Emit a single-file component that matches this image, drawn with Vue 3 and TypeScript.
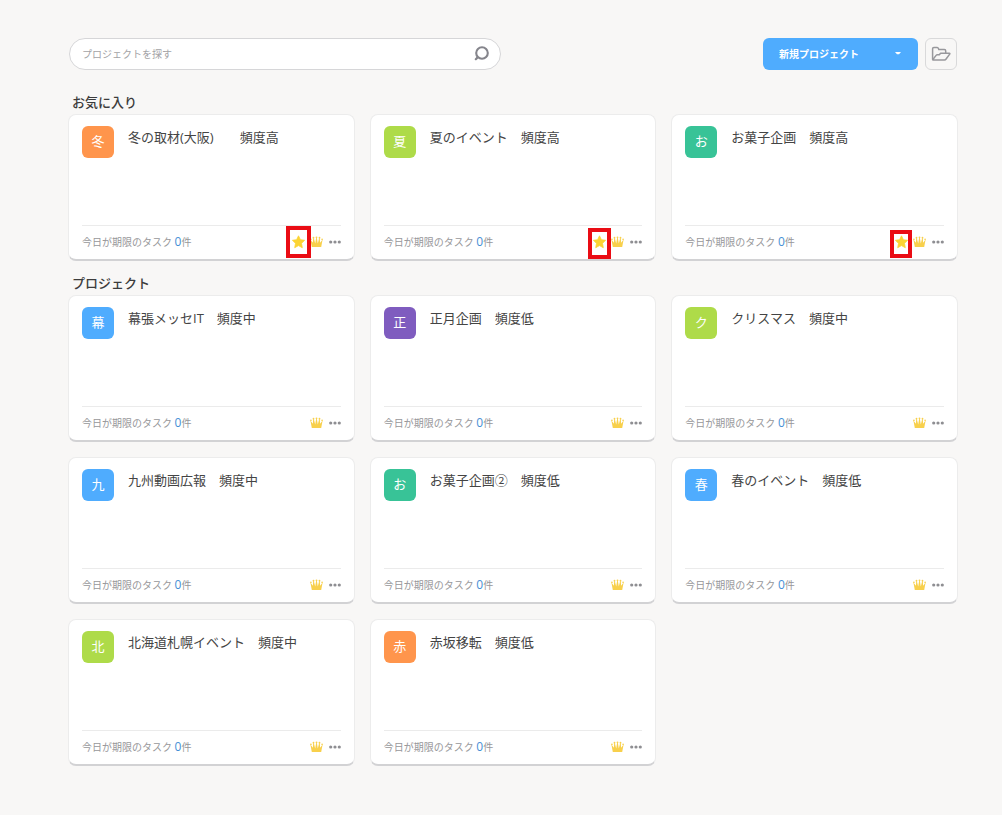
<script setup lang="ts">
import { ref } from 'vue'

type Tone = 'orange' | 'lime' | 'green' | 'blue' | 'purple'

interface Project {
  id: number
  name: string
  tone: Tone
  due: number
  mark?: 'tall' | 'medium' | 'short'
}

interface Section {
  id: string
  title: string
  projects: Project[]
}

const query = ref('')

const sections: Section[] = [
  {
    id: 'favorites',
    title: 'お気に入り',
    projects: [
      { id: 1, name: '冬の取材(大阪)　　頻度高', tone: 'orange', due: 0, mark: 'tall' },
      { id: 2, name: '夏のイベント　頻度高', tone: 'lime', due: 0, mark: 'medium' },
      { id: 3, name: 'お菓子企画　頻度高', tone: 'green', due: 0, mark: 'short' },
    ],
  },
  {
    id: 'projects',
    title: 'プロジェクト',
    projects: [
      { id: 4, name: '幕張メッセIT　頻度中', tone: 'blue', due: 0 },
      { id: 5, name: '正月企画　頻度低', tone: 'purple', due: 0 },
      { id: 6, name: 'クリスマス　頻度中', tone: 'lime', due: 0 },
      { id: 7, name: '九州動画広報　頻度中', tone: 'blue', due: 0 },
      { id: 8, name: 'お菓子企画②　頻度低', tone: 'green', due: 0 },
      { id: 9, name: '春のイベント　頻度低', tone: 'blue', due: 0 },
      { id: 10, name: '北海道札幌イベント　頻度中', tone: 'lime', due: 0 },
      { id: 11, name: '赤坂移転　頻度低', tone: 'orange', due: 0 },
    ],
  },
]
</script>

<template>
  <main class="page">
    <header class="toolbar">
      <form class="search" role="search" @submit.prevent>
        <input v-model="query" class="search-input" type="text" aria-label="プロジェクトを探す" placeholder="プロジェクトを探す" />
        <button class="search-button" type="submit" aria-label="検索">
          <svg width="16" height="16" viewBox="0 0 16 16" fill="none" stroke="#85858c" stroke-linecap="round">
            <circle cx="9" cy="7" r="5.8" stroke-width="2.1" />
            <path d="M4.4 11.6 2.8 13.2" stroke-width="2.2" />
          </svg>
        </button>
      </form>
      <div class="toolbar-actions">
        <button class="new-project" type="button" aria-haspopup="menu">
          <span>新規プロジェクト</span>
          <svg width="6" height="3" viewBox="0 0 6 3"><path d="M0 0h6L4 2.2H2z" fill="#fff" /></svg>
        </button>
        <button class="folder" type="button" aria-label="フォルダ">
          <svg width="20" height="16" viewBox="0 0 20 16" fill="none" stroke="#98989c" stroke-width="1.5" stroke-linejoin="round">
            <path d="M1.6 13.6V2.8C1.6 2 2.1 1.5 2.9 1.5h3.2c.8 0 1.2.4 1.4 1.1l.3 1h5.6c.8 0 1.3.5 1.3 1.3v2.2" />
            <path d="M1.7 13.8 5.1 9.4c.3-.4.7-.6 1.2-.6h2l1.3-1.6h8.7c.6 0 .8.4.4.9l-3.6 4.9c-.4.6-.9.9-1.6.9H2.1c-.3 0-.4 0-.4-.1Z" />
          </svg>
        </button>
      </div>
    </header>

    <section v-for="section in sections" :key="section.id" class="section" :aria-labelledby="section.id">
      <h2 :id="section.id" class="section-title">{{ section.title }}</h2>
      <div class="grid">
        <article v-for="project in section.projects" :key="project.id" class="card">
          <div class="card-body">
            <span class="avatar" :class="project.tone" aria-hidden="true">{{ project.name.charAt(0) }}</span>
            <h3 class="card-title">{{ project.name }}</h3>
          </div>
          <footer class="card-footer">
            <p class="due">今日が期限のタスク <span class="count">{{ project.due }}</span>件</p>
            <div class="card-actions">
              <button v-if="project.mark" class="icon-button star" type="button" aria-label="お気に入り">
                <svg width="13" height="14" viewBox="0 0 13 14">
                  <path d="M6.5.8 8.4 4.7l4.2.6-3.1 3 .8 4.4-3.8-2.1-3.8 2.1.8-4.4-3.1-3 4.2-.6z" fill="#fbd433" stroke="#fbd433" stroke-width=".8" stroke-linejoin="round" />
                </svg>
                <span class="mark" :class="project.mark"></span>
              </button>
              <svg class="crown" width="13" height="12" viewBox="0 0 13 12" fill="#f8d04c" aria-hidden="true">
                <path d="M.4 3.4 2.9 6.8 3.2 2h.6L5.2 7.4 6.2 1.6h.6L7.8 7.4 9.2 2h.6l.3 4.8 2.5-3.4-1.4 7.6H1.8z" />
                <circle cx=".9" cy="3.4" r=".8" />
                <circle cx="3.5" cy="1.7" r=".9" />
                <circle cx="6.5" cy="1.3" r=".9" />
                <circle cx="9.5" cy="1.7" r=".9" />
                <circle cx="12.1" cy="3.4" r=".8" />
              </svg>
              <button class="icon-button more" type="button" aria-label="メニュー">
                <svg width="12" height="4" viewBox="0 0 12 4" fill="#8e8e92">
                  <circle cx="1.7" cy="2" r="1.6" />
                  <circle cx="6" cy="2" r="1.6" />
                  <circle cx="10.3" cy="2" r="1.6" />
                </svg>
              </button>
            </div>
          </footer>
        </article>
      </div>
    </section>
  </main>
</template>

<style>
body {
  background: #f8f7f6;
}
</style>

<style scoped>
.page,
.page * {
  box-sizing: border-box;
}

.page {
  padding: 38px 44px 48px 68px;
  color: #444;
  font-family: "Open Sans", "Noto Sans CJK JP", sans-serif;
}

button,
input {
  margin: 0;
  font-family: inherit;
}

.toolbar {
  display: flex;
  justify-content: space-between;
  gap: 24px;
  margin: 0 1px 20px;
}

.search {
  display: flex;
  align-items: center;
  flex: 0 1 432px;
  height: 32px;
  padding: 0 11px 0 12px;
  border: 1px solid #d6d6d8;
  border-radius: 16px;
  background: #fff;
}

.search-input {
  flex: 1;
  min-width: 0;
  padding: 0;
  border: 0;
  outline: 0;
  background: transparent;
  color: #444;
  font-size: 10px;
  line-height: 16px;
}

.search-input::placeholder {
  color: #a3a3a6;
  opacity: 1;
}

.search-button,
.icon-button {
  display: flex;
  padding: 0;
  border: 0;
  background: none;
  cursor: pointer;
}

.toolbar-actions {
  display: flex;
  gap: 7px;
}

.new-project {
  display: flex;
  align-items: center;
  justify-content: space-between;
  width: 155px;
  height: 32px;
  padding: 0 17px 2px 16px;
  border: 0;
  border-radius: 6px;
  background: #4facfe;
  color: #fff;
  font-size: 10px;
  font-weight: 700;
  cursor: pointer;
}

.folder {
  display: flex;
  align-items: center;
  justify-content: center;
  width: 32px;
  height: 32px;
  padding: 0;
  border: 1px solid #d9d9da;
  border-radius: 6px;
  background: transparent;
  cursor: pointer;
}

.section + .section {
  margin-top: 10px;
}

.section-title {
  margin: 0;
  padding-left: 4px;
  color: #3c3c3c;
  font-size: 13px;
  font-weight: 500;
  line-height: 24px;
}

.grid {
  display: grid;
  grid-template-columns: repeat(3, minmax(0, 1fr));
  gap: 15px;
}

.card {
  padding: 0 13px;
  border: 1px solid #ececec;
  border-bottom: 2px solid #d2d2d4;
  border-radius: 8px;
  background: #fff;
}

.card-body {
  display: flex;
  align-items: flex-start;
  gap: 14px;
  min-height: 110px;
  padding-top: 11px;
}

.avatar {
  flex: none;
  width: 32px;
  height: 32px;
  border-radius: 6px;
  color: #fff;
  font-size: 13px;
  line-height: 30px;
  text-align: center;
}

.orange { background: #ff954c; }
.lime { background: #aedb49; }
.green { background: #38c397; }
.blue { background: #4facfe; }
.purple { background: #7f5cbf; }

.card-title {
  margin: 0;
  color: #444;
  font-size: 13px;
  font-weight: 400;
  line-height: 22px;
}

.card-footer {
  display: flex;
  align-items: center;
  justify-content: space-between;
  height: 34px;
  padding-bottom: 1px;
  border-top: 1px solid #ebebeb;
}

.due {
  margin: 0;
  color: #97979a;
  font-size: 10px;
  line-height: 20px;
}

.count {
  color: #468fd6;
  font-size: 12px;
}

.card-actions {
  display: flex;
  align-items: center;
}

.star {
  position: relative;
  margin-right: 5px;
}

.crown {
  margin-right: 6px;
}

.mark {
  position: absolute;
  border: 4px solid #ea0c14;
  pointer-events: none;
}

.mark.tall { inset: -9px -6px; }
.mark.medium { inset: -7px -5px -10px; }
.mark.short { inset: -5px -4px -9px -5px; }
</style>
